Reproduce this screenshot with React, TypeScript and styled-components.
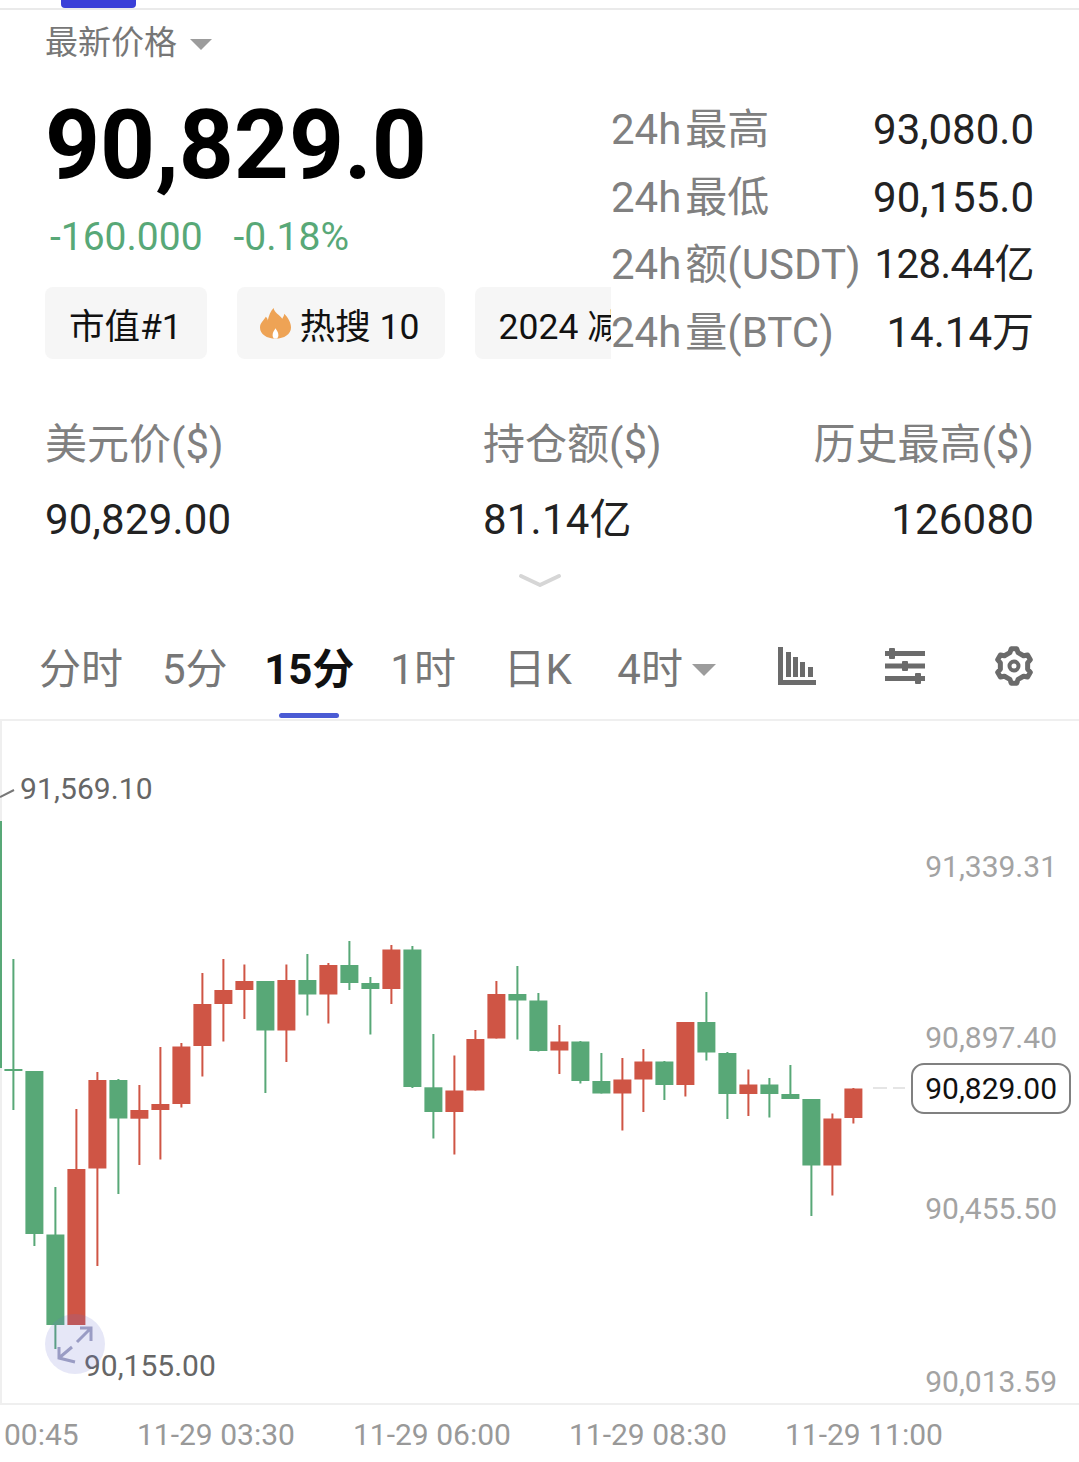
import { createGlobalStyle } from "styled-components";
import styled from "styled-components";

const FONT = `Roboto, "Noto Sans CJK SC", sans-serif`;
const GREEN = "#58a877";
const RED = "#cf5545";

const GlobalStyle = createGlobalStyle`
  html, body {
    margin: 0;
    padding: 0;
    background: #fff;
  }
  body {
    font-family: ${FONT};
    width: 1079px;
    height: 1462px;
    overflow: hidden;
  }
`;

const Page = styled.div`
  width: 1079px;
  height: 1462px;
  overflow: hidden;
`;

const TopBar = styled.div`
  height: 8px;
  border-bottom: 2px solid #eaeaea;
  padding-left: 61px;
`;

const TopIndicator = styled.div`
  width: 75px;
  height: 8px;
  background: #3a3fd8;
  border-radius: 0 0 4px 4px;
`;

const Selector = styled.div`
  display: flex;
  align-items: center;
  height: 66px;
  margin-left: 45px;
  font-size: 33px;
  line-height: 68px;
  color: #777;
`;

const Caret = styled.i`
  display: block;
  width: 0;
  height: 0;
  margin-left: 13px;
  margin-top: 2px;
  border-left: 11px solid transparent;
  border-right: 11px solid transparent;
  border-top: 11px solid #9c9c9c;
`;

const Summary = styled.section`
  display: flex;
  height: 300px;
`;

const SummaryLeft = styled.div`
  width: 611px;
  padding-left: 45px;
  box-sizing: border-box;
  overflow: hidden;
  flex: none;
`;

const BigPrice = styled.div`
  font-size: 96px;
  font-weight: 700;
  line-height: 110px;
  color: #000;
  margin-top: 14px;
`;

const ChangeRow = styled.div`
  display: flex;
  gap: 31px;
  margin-top: 15px;
  margin-left: 5px;
  font-size: 39px;
  line-height: 44px;
  color: ${GREEN};
`;

const ChipRow = styled.div`
  display: flex;
  gap: 30px;
  margin-top: 28px;
  width: 700px;
`;

const Chip = styled.div`
  display: flex;
  align-items: center;
  flex: none;
  gap: 9px;
  height: 72px;
  padding: 0 25px 0 24px;
  border-radius: 8px;
  background: #f6f6f6;
  font-size: 35.5px;
  color: #111;
  white-space: nowrap;
`;

const FlameWrap = styled.span`
  display: flex;
  margin-left: -1px;
`;

const Stats = styled.div`
  flex: 1;
  padding: 20px 45px 0 0;
`;

const StatRow = styled.div`
  display: flex;
  justify-content: space-between;
  height: 67.5px;
  line-height: 67.5px;
  font-size: 42px;
  white-space: nowrap;
`;

const StatLabel = styled.span`
  color: #808080;
`;

const StatLabelRest = styled.span`
  margin-left: 4px;
`;

const StatValue = styled.span<{ $compact?: boolean }>`
  color: #222;
  font-size: ${(p) => (p.$compact ? 40 : 42)}px;
  letter-spacing: ${(p) => (p.$compact ? -0.5 : 0)}px;
`;

const Metrics = styled.section`
  display: grid;
  grid-template-columns: 438px 1fr auto;
  padding: 0 45px;
  margin-top: 31px;
  font-size: 42px;
  line-height: 75px;
  white-space: nowrap;
`;

const MetricLabel = styled.div<{ $right?: boolean }>`
  color: #808080;
  text-align: ${(p) => (p.$right ? "right" : "left")};
`;

const MetricValue = styled.div<{ $right?: boolean }>`
  color: #222;
  letter-spacing: 0.2px;
  text-align: ${(p) => (p.$right ? "right" : "left")};
`;

const Expand = styled.div`
  display: flex;
  justify-content: center;
  height: 20px;
  margin-top: 15px;
`;

const Tabs = styled.nav`
  display: flex;
  align-items: center;
  height: 99px;
  margin-top: 28px;
  padding-left: 39px;
  border-bottom: 2px solid #efefef;
  font-size: 42px;
  color: #777;
  white-space: nowrap;
`;

const Tab = styled.div<{ $gap?: number; $active?: boolean }>`
  position: relative;
  margin-left: ${(p) => p.$gap ?? 0}px;
  font-weight: ${(p) => (p.$active ? 700 : 400)};
  color: ${(p) => (p.$active ? "#111" : "#777")};
  line-height: 99px;
  display: flex;
  align-items: center;
`;

const TabMark = styled.i`
  position: absolute;
  left: 15px;
  bottom: 1px;
  width: 60px;
  height: 5px;
  border-radius: 3px;
  background: #4a5bd4;
`;

const TabCaret = styled(Caret)`
  margin-left: 9px;
  margin-top: 0;
  border-left-width: 12px;
  border-right-width: 12px;
  border-top-width: 12px;
`;

const ToolIcons = styled.div`
  display: flex;
  align-items: center;
  margin-left: 62px;
  padding-bottom: 8px;
  gap: 69px;
`;

const Chart = styled.div`
  position: relative;
  height: 684px;
  box-shadow: inset 2px 0 #efefef, inset 0 -2px #efefef;
  overflow: hidden;
`;

const ChartSvg = styled.svg`
  display: block;
  position: absolute;
  left: 0;
  top: 0;
  font-family: ${FONT};
`;

const FullscreenButton = styled.div`
  position: absolute;
  left: 45px;
  top: 593px;
  width: 60px;
  height: 60px;
  border-radius: 50%;
  background: rgba(104, 110, 210, 0.17);
  display: flex;
  align-items: center;
  justify-content: center;
`;

const TimeAxis = styled.div`
  display: flex;
  padding-left: 4px;
  margin-top: 11px;
  font-size: 30px;
  line-height: 38px;
  color: #999;
  white-space: nowrap;
`;

const TimeLabel = styled.span<{ $first?: boolean }>`
  width: ${(p) => (p.$first ? 133 : 216)}px;
  flex: none;
`;

// [top wick, body top, body bottom, bottom wick, up?] in page y
type Candle = [number, number, number, number, boolean];

const candles: Candle[] = [
  [959, 1069, 1071, 1110, false],
  [1071, 1071, 1234, 1246, false],
  [1187, 1234.5, 1325, 1349, false],
  [1109, 1169, 1325, 1325, true],
  [1072, 1080, 1168.5, 1266, true],
  [1079, 1080, 1118.5, 1194, false],
  [1085, 1110, 1118.7, 1165, true],
  [1047, 1104, 1110, 1159.5, true],
  [1043, 1046.5, 1104, 1107.5, true],
  [973, 1004, 1046, 1076.5, true],
  [959, 990, 1004, 1041.5, true],
  [964.5, 981, 990, 1019, true],
  [981, 981, 1030.5, 1093, false],
  [964.5, 980, 1030.5, 1062, true],
  [954, 980, 994.5, 1015.5, false],
  [963, 965, 994.5, 1023.5, true],
  [941, 965, 983, 990, false],
  [977, 983, 989, 1034.5, false],
  [945, 949.5, 989, 1004, true],
  [946, 949.5, 1087, 1088, false],
  [1034, 1087.3, 1112, 1138.5, false],
  [1055.5, 1090.5, 1112, 1154.5, true],
  [1030, 1039, 1090.5, 1090.5, true],
  [981, 994, 1038.5, 1038.5, true],
  [966, 994, 1000.5, 1039.5, false],
  [993, 1000.5, 1051, 1051.5, false],
  [1025, 1041.5, 1050.5, 1074, true],
  [1041, 1041.5, 1081, 1083.5, false],
  [1053, 1081, 1093.5, 1093.5, false],
  [1058, 1079.5, 1093.5, 1130.5, true],
  [1049, 1061.5, 1079.5, 1112, true],
  [1061, 1061.5, 1085, 1100, false],
  [1022, 1022, 1085, 1096.5, true],
  [992, 1022, 1052.5, 1060.5, false],
  [1052, 1053, 1094, 1119, false],
  [1069.5, 1084.5, 1094, 1116, true],
  [1078, 1084.5, 1094, 1117.5, false],
  [1065, 1094, 1099, 1099, false],
  [1099, 1099, 1165.5, 1216, false],
  [1113.5, 1118.5, 1165.5, 1195.5, true],
  [1088, 1088.5, 1118, 1123.5, true],
];

const CHART_TOP = 721;

const PriceLabel = ({ y, children }: { y: number; children: string }) => (
  <text x={1057} y={y - CHART_TOP} textAnchor="end" fontSize={30} fill="#a3a3a3">
    {children}
  </text>
);

const CandleChart = () => (
  <ChartSvg width={1079} height={684} viewBox="0 0 1079 684">
    <rect x={0} y={821 - CHART_TOP} width={2} height={247} fill={GREEN} />
    {candles.map(([hi, top, bottom, lo, up], i) => {
      const cx = 13.4 + 21 * i;
      const color = up ? RED : GREEN;
      return (
        <g key={i} fill={color}>
          <rect x={cx - 1} y={hi - CHART_TOP} width={2} height={lo - hi} />
          <rect x={cx - 9} y={top - CHART_TOP} width={18} height={bottom - top} />
        </g>
      );
    })}

    <path d={`M0 ${797 - CHART_TOP}L14 ${790 - CHART_TOP}`} stroke="#777" strokeWidth={2} fill="none" />
    <text x={20} y={799 - CHART_TOP} fontSize={30} letterSpacing={0.1} fill="#666">
      91,569.10
    </text>
    <text x={84} y={1376 - CHART_TOP} fontSize={30} fill="#666">
      90,155.00
    </text>

    <PriceLabel y={877}>91,339.31</PriceLabel>
    <PriceLabel y={1048}>90,897.40</PriceLabel>
    <PriceLabel y={1219}>90,455.50</PriceLabel>
    <PriceLabel y={1392}>90,013.59</PriceLabel>

    <path d={`M873 ${1088 - CHART_TOP}H905`} stroke="#ddd" strokeWidth={1.5} strokeDasharray="14 6" />
    <rect
      x={912}
      y={1064 - CHART_TOP}
      width={158}
      height={49}
      rx={12}
      fill="#fff"
      stroke="#808080"
      strokeWidth={2}
    />
    <text x={1057} y={1099 - CHART_TOP} textAnchor="end" fontSize={30} fill="#111">
      90,829.00
    </text>
  </ChartSvg>
);

const FlameIcon = () => (
  <svg width="31" height="31" viewBox="0 0 32 32">
    <path
      d="M14 0C15 5 20 7 23 11C24 9 25 8 25 6C29 10 32 15 32 20C32 27 25 31.500 16 31.500C7 31.500 0 27 0 20C0 15 4 13 6 9C7 10 8 11 8 13C9 8 11 3 14 0z"
      fill="#eea355"
    />
    <path d="M16 21C17 23 19 25 19 28C19 30 18 31.500 16 31.500S13 30 13 28C13 25 15 23 16 21z" fill="#fff" />
  </svg>
);

const BarsIcon = () => (
  <svg width="38" height="38" viewBox="0 0 38 38" fill="#6b6b6b">
    <rect x="0" y="0" width="5" height="38" />
    <rect x="0" y="33" width="38" height="5" />
    <rect x="8" y="5" width="5" height="25" />
    <rect x="15" y="10" width="5" height="20" />
    <rect x="22" y="15" width="5" height="15" />
    <rect x="30" y="20" width="5" height="10" />
  </svg>
);

const SlidersIcon = () => (
  <svg width="40" height="36" viewBox="0 0 40 36" fill="#6b6b6b">
    <rect x="0" y="3" width="40" height="5" />
    <rect x="0" y="15.500" width="40" height="5" />
    <rect x="0" y="28" width="40" height="5" />
    <rect x="4" y="0" width="6" height="11" rx="1" />
    <rect x="17" y="13" width="6" height="10" rx="1" />
    <rect x="30" y="25" width="6" height="11" rx="1" />
  </svg>
);

// six round teeth, one pointing straight up
const gearPath = () => {
  const pts: string[] = [];
  for (let k = 0; k < 6; k++) {
    const a = -90 + 60 * k;
    const ring = [
      [a - 17, 14],
      [a - 9, 17.5],
      [a + 9, 17.5],
      [a + 17, 14],
    ];
    ring.forEach(([deg, r]) => {
      const rad = (deg * Math.PI) / 180;
      pts.push(`${(20 + r * Math.cos(rad)).toFixed(2)} ${(20 + r * Math.sin(rad)).toFixed(2)}`);
    });
  }
  return `M${pts.join("L")}z`;
};

const GearIcon = () => (
  <svg width="40" height="40" viewBox="0 0 40 40" fill="none" stroke="#6b6b6b">
    <path strokeWidth="5" strokeLinejoin="round" d={gearPath()} />
    <circle cx="20" cy="20" r="4.500" strokeWidth="4" />
  </svg>
);

const ExpandIcon = () => (
  <svg width="44" height="44" viewBox="0 0 44 44" fill="none" stroke="#9a9cc4" strokeWidth="3">
    <path d="M24 20L38 6M27 6H38V19" />
    <path d="M19 25L6 36M6 25V36L22 40" />
  </svg>
);

const statRows = [
  { label: "最高", value: "93,080.0" },
  { label: "最低", value: "90,155.0" },
  { label: "额(USDT)", value: "128.44亿", compact: true },
  { label: "量(BTC)", value: "14.14万" },
];

export default function App() {
  return (
    <Page>
      <GlobalStyle />
      <TopBar>
        <TopIndicator />
      </TopBar>
      <Selector>
        最新价格
        <Caret />
      </Selector>
      <Summary>
        <SummaryLeft>
          <BigPrice>90,829.0</BigPrice>
          <ChangeRow>
            <span>-160.000</span>
            <span>-0.18%</span>
          </ChangeRow>
          <ChipRow>
            <Chip>市值#1</Chip>
            <Chip>
              <FlameWrap>
                <FlameIcon />
              </FlameWrap>
              热搜 10
            </Chip>
            <Chip>2024 减半</Chip>
          </ChipRow>
        </SummaryLeft>
        <Stats>
          {statRows.map((row) => (
            <StatRow key={row.label}>
              <StatLabel>
                24h
                <StatLabelRest>{row.label}</StatLabelRest>
              </StatLabel>
              <StatValue $compact={row.compact}>{row.value}</StatValue>
            </StatRow>
          ))}
        </Stats>
      </Summary>
      <Metrics>
        <MetricLabel>美元价($)</MetricLabel>
        <MetricLabel>持仓额($)</MetricLabel>
        <MetricLabel $right>历史最高($)</MetricLabel>
        <MetricValue>90,829.00</MetricValue>
        <MetricValue>81.14亿</MetricValue>
        <MetricValue $right>126080</MetricValue>
      </Metrics>
      <Expand>
        <svg width="44" height="18" viewBox="0 0 44 18" fill="none">
          <path d="M3 4l19 9 19-9" stroke="#d6d6d6" strokeWidth="4" strokeLinecap="round" strokeLinejoin="round" />
        </svg>
      </Expand>
      <Tabs>
        <Tab>分时</Tab>
        <Tab $gap={39}>5分</Tab>
        <Tab $gap={36.5} $active>
          15分
          <TabMark />
        </Tab>
        <Tab $gap={36}>1时</Tab>
        <Tab $gap={47.5}>日K</Tab>
        <Tab $gap={45.5}>
          4时
          <TabCaret />
        </Tab>
        <ToolIcons>
          <BarsIcon />
          <SlidersIcon />
          <GearIcon />
        </ToolIcons>
      </Tabs>
      <Chart>
        <CandleChart />
        <FullscreenButton>
          <ExpandIcon />
        </FullscreenButton>
      </Chart>
      <TimeAxis>
        <TimeLabel $first>00:45</TimeLabel>
        <TimeLabel>11-29 03:30</TimeLabel>
        <TimeLabel>11-29 06:00</TimeLabel>
        <TimeLabel>11-29 08:30</TimeLabel>
        <TimeLabel>11-29 11:00</TimeLabel>
      </TimeAxis>
    </Page>
  );
}
